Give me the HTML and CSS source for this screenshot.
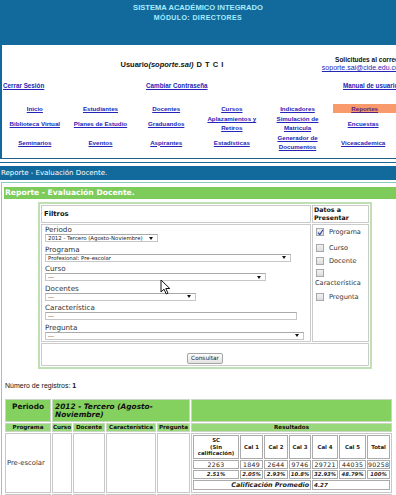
FILE: index.html
```html
<!DOCTYPE html>
<html lang="es">
<head>
    <meta charset="UTF-8">
    <title>Sistema Académico Integrado - Reportes</title>
    <link rel="stylesheet" href="styles.css">
</head>
<body>
    <div class="banner">
        <div class="banner-title">SISTEMA ACADÉMICO INTEGRADO</div>
        <div class="banner-sub">MÓDULO: DIRECTORES</div>
    </div>

    <div class="menu-box">
        <div class="user-row">
            <div class="user">Usuario<i>(soporte.sai)</i> D T C I</div>
            <div class="mail">
                <b>Solicitudes al correo</b><br>
                <a href="#">soporte.sai@cide.edu.co</a>
            </div>
        </div>
        <div class="tools-row">
            <a href="#">Cerrar Sesión</a>
            <a href="#">Cambiar Contraseña</a>
            <a href="#">Manual de usuario</a>
        </div>
        <div class="nav">
            <div class="nav-item"><a href="#">Inicio</a></div>
            <div class="nav-item"><a href="#">Estudiantes</a></div>
            <div class="nav-item"><a href="#">Docentes</a></div>
            <div class="nav-item"><a href="#">Cursos</a></div>
            <div class="nav-item"><a href="#">Indicadores</a></div>
            <div class="nav-item active"><a href="#">Reportes</a></div>

            <div class="nav-item"><a href="#">Biblioteca Virtual</a></div>
            <div class="nav-item"><a href="#">Planes de Estudio</a></div>
            <div class="nav-item"><a href="#">Graduandos</a></div>
            <div class="nav-item"><a href="#">Aplazamientos y<br>Retiros</a></div>
            <div class="nav-item"><a href="#">Simulación de<br>Matricula</a></div>
            <div class="nav-item"><a href="#">Encuestas</a></div>

            <div class="nav-item"><a href="#">Seminarios</a></div>
            <div class="nav-item"><a href="#">Eventos</a></div>
            <div class="nav-item"><a href="#">Aspirantes</a></div>
            <div class="nav-item"><a href="#">Estadísticas</a></div>
            <div class="nav-item"><a href="#">Generador de<br>Documentos</a></div>
            <div class="nav-item"><a href="#">Viceacademica</a></div>
        </div>
    </div>

    <div class="page-bar">
        <div class="page-bar-inner">Reporte - Evaluación Docente.</div>
    </div>

    <div class="panel">
        <div class="panel-head">Reporte - Evaluación Docente.</div>

        <table class="filters">
            <tr>
                <th class="f-head">Filtros</th>
                <th class="d-head">Datos a<br>Presentar</th>
            </tr>
            <tr>
                <td class="f-body">
                    <div class="field">
                        <div class="lbl">Periodo</div>
                        <div class="sel sel-periodo"><span>2012 - Tercero (Agosto-Noviembre)</span><span class="caret"></span></div>
                    </div>
                    <div class="field">
                        <div class="lbl">Programa</div>
                        <div class="sel sel-programa"><span>Profesional: Pre-escolar</span><span class="caret"></span></div>
                    </div>
                    <div class="field">
                        <div class="lbl">Curso</div>
                        <div class="sel sel-curso"><span>---</span><span class="caret"></span></div>
                    </div>
                    <div class="field">
                        <div class="lbl">Docentes</div>
                        <div class="sel sel-docentes"><span>---</span><span class="caret"></span></div>
                    </div>
                    <div class="field">
                        <div class="lbl">Característica</div>
                        <div class="sel sel-caract"><span>---</span></div>
                    </div>
                    <div class="field">
                        <div class="lbl">Pregunta</div>
                        <div class="sel sel-pregunta"><span>---</span><span class="caret"></span></div>
                    </div>
                </td>
                <td class="d-body">
                    <div class="opt">
                        <span class="cb checked"><svg width="7" height="7" viewBox="0 0 7 7"><path d="M1 3.6 L2.8 5.6 L6 0.8" fill="none" stroke="#2a3fa8" stroke-width="1.1"/></svg></span>Programa
                    </div>
                    <div class="opt opt-curso"><span class="cb"></span>Curso</div>
                    <div class="opt"><span class="cb"></span>Docente</div>
                    <div class="opt opt-stack"><span class="cb"></span><span class="opt-text">Característica</span></div>
                    <div class="opt opt-preg"><span class="cb"></span>Pregunta</div>
                </td>
            </tr>
            <tr>
                <td colspan="2" class="f-foot"><button type="button">Consultar</button></td>
            </tr>
        </table>

        <p class="count">Número de registros: <b>1</b></p>

        <table class="results">
            <colgroup>
                <col class="c-prog"><col class="c-curso"><col class="c-doc"><col class="c-car"><col class="c-preg"><col class="c-res">
            </colgroup>
            <tr class="r-period">
                <th>Periodo</th>
                <th colspan="4" class="period-val">2012 - Tercero (Agosto-Noviembre)</th>
                <th></th>
            </tr>
            <tr class="r-head">
                <th>Programa</th>
                <th>Curso</th>
                <th>Docente</th>
                <th>Característica</th>
                <th>Pregunta</th>
                <th>Resultados</th>
            </tr>
            <tr class="r-data">
                <td class="prog">Pre-escolar</td>
                <td></td>
                <td></td>
                <td></td>
                <td></td>
                <td class="res">
                    <table class="scores">
                        <colgroup>
                            <col class="s-sc"><col class="s-c1"><col class="s-c2"><col class="s-c3"><col class="s-c4"><col class="s-c5"><col class="s-tot">
                        </colgroup>
                        <tr class="s-head">
                            <th>SC<br>(Sin<br>calificación)</th>
                            <th>Cal 1</th>
                            <th>Cal 2</th>
                            <th>Cal 3</th>
                            <th>Cal 4</th>
                            <th>Cal 5</th>
                            <th>Total</th>
                        </tr>
                        <tr class="s-val">
                            <td>2263</td><td>1849</td><td>2644</td><td>9746</td><td>29721</td><td>44035</td><td>90258</td>
                        </tr>
                        <tr class="s-pct">
                            <td>2.51%</td><td>2.05%</td><td>2.93%</td><td>10.8%</td><td>32.93%</td><td>48.79%</td><td>100%</td>
                        </tr>
                        <tr class="s-avg">
                            <td colspan="4" class="avg-label">Calificación Promedio</td>
                            <td colspan="3" class="avg-val">4.27</td>
                        </tr>
                    </table>
                </td>
            </tr>
            <tr class="r-next">
                <td></td><td></td><td></td><td></td><td></td><td></td>
            </tr>
        </table>
    </div>

    <svg class="cursor" width="11" height="16" viewBox="0 0 11 16">
        <path d="M1 1 L1 13 L4 10.2 L6.2 15 L8 14.2 L5.8 9.5 L9.8 9.5 Z" fill="#fff" stroke="#111" stroke-width="1"/>
    </svg>
</body>
</html>
```

FILE: styles.css
```css
body {
    margin: 0;
    width: 396px;
    height: 495px;
    overflow: hidden;
    position: relative;
    font-family: "DejaVu Sans", Verdana, sans-serif;
    color: #222;
    background: #fff;
}
a {
    color: #2424b8;
}

/* top banner */
.banner {
    box-sizing: border-box;
    height: 45px;
    padding-top: 3px;
    background: #126a9c;
    color: #a6ecff;
    text-align: center;
    font-family: "Liberation Sans", Arial, sans-serif;
    font-weight: bold;
}
.banner-title {
    font-size: 7.6px;
    line-height: 9px;
}
.banner-sub {
    margin-top: 1px;
    font-size: 7px;
    line-height: 9px;
    letter-spacing: 0.4px;
}

/* menu block */
.menu-box {
    border-left: 2px solid #126a9c;
    border-bottom: 1px solid #1d5f86;
    padding: 11px 0 7px;
    font-family: "Liberation Sans", Arial, sans-serif;
}
.user-row {
    display: flex;
    align-items: center;
}
.user {
    flex: 1;
    padding-left: 20px;
    text-align: center;
    font-size: 7.5px;
    font-weight: bold;
    color: #111;
    word-spacing: 1px;
}
.mail {
    margin-right: -3px;
    text-align: right;
    white-space: nowrap;
    font-size: 6.5px;
    line-height: 8px;
    color: #111;
}
.mail a {
    font-size: 7px;
}
.tools-row {
    display: grid;
    grid-template-columns: 143px 197px auto;
    margin-top: 10px;
    padding-left: 1px;
    line-height: 8px;
    white-space: nowrap;
}
.tools-row a {
    font-size: 6.3px;
    font-weight: bold;
}
.nav {
    display: grid;
    grid-template-columns: repeat(6, 1fr);
    grid-template-rows: 9px 18px 18px;
    row-gap: 1px;
    margin-top: 14px;
}
.nav-item {
    display: flex;
    align-items: center;
    justify-content: center;
    text-align: center;
    line-height: 9px;
}
.nav-item a {
    font-size: 6.2px;
    font-weight: bold;
    white-space: nowrap;
}
.nav-item.active {
    margin-left: 3px;
    height: 9px;
    align-self: start;
    background: #f99a6c;
}
.nav-item.active a {
    color: #5a2080;
}

/* page title bar */
.page-bar {
    margin-top: 3px;
    border-top: 1px solid #1a6a98;
    padding-top: 3px;
}
.page-bar-inner {
    height: 14px;
    line-height: 14px;
    padding-left: 1px;
    background: #126a9c;
    color: #fff;
    font-size: 7px;
}

/* report panel */
.panel {
    margin: 2px -4px 0 1px;
    border: 1px solid #8ccac0;
    border-bottom: none;
    padding: 4px 2px 0;
}
.panel-head {
    height: 12px;
    line-height: 12px;
    padding-left: 1px;
    background: #7dcb5b;
    color: #fff;
    font-size: 7.6px;
    font-weight: bold;
}

/* filters */
.filters {
    margin: 3px 0 0 34px;
    border: 2px solid #bfe0b2;
    border-spacing: 1px;
    table-layout: fixed;
    width: 327px;
}
.filters th,
.filters td {
    border: 1px solid #cbcbcb;
    padding: 0;
}
.f-head {
    width: 266px;
    padding-left: 2px !important;
    text-align: left;
    font-size: 6.8px;
    color: #111;
}
.d-head {
    width: 54px;
    padding-left: 1px !important;
    text-align: left;
    font-size: 6.3px;
    line-height: 8px;
    color: #111;
}
.f-body {
    padding: 0 3px 1px !important;
    vertical-align: top;
}
.field {
    margin-bottom: 2.5px;
}
.field:last-child {
    margin-bottom: 0;
}
.lbl {
    height: 9px;
    line-height: 9px;
    font-size: 7.2px;
    color: #333;
}
.sel {
    box-sizing: border-box;
    display: flex;
    align-items: center;
    justify-content: space-between;
    height: 8px;
    padding: 0 4px 0 2px;
    border: 1px solid #c6c6c6;
    border-top-color: #a9a9a9;
    background: #fff;
    font-size: 5.4px;
    color: #222;
    white-space: nowrap;
}
.caret {
    width: 0;
    height: 0;
    border-left: 2px solid transparent;
    border-right: 2px solid transparent;
    border-top: 3px solid #111;
}
.sel-periodo { width: 113px; }
.sel-programa { width: 246px; }
.sel-curso { width: 221px; }
.sel-docentes { width: 151px; }
.sel-caract { width: 252px; }
.sel-pregunta { width: 259px; }

.d-body {
    padding: 0 1px 0 3px !important;
    vertical-align: top;
    font-size: 6.6px;
    color: #333;
}
.opt {
    display: flex;
    align-items: center;
    height: 13px;
}
.opt-curso {
    margin-top: 3px;
}
.opt-stack {
    display: block;
    height: auto;
}
.opt-stack .cb {
    display: block;
    margin: 2px 0 1px;
}
.opt-text {
    display: block;
    margin-left: -1px;
    line-height: 10px;
}
.opt-preg {
    margin-top: 2px;
}
.cb {
    box-sizing: border-box;
    width: 8px;
    height: 8px;
    margin-right: 5px;
    border: 1px solid #a8a8a8;
    background: linear-gradient(#f2f2f2, #dcdcdc);
}
.cb svg {
    display: block;
}
.f-foot {
    padding: 1px 0 !important;
    text-align: center;
}
.f-foot button {
    height: 11px;
    padding: 0 3px;
    border: 1px solid #a4a4a4;
    border-radius: 2px;
    background: linear-gradient(#fdfdfd, #e2e2e2);
    font-family: "DejaVu Sans", Verdana, sans-serif;
    font-size: 5.8px;
    line-height: 9px;
    color: #222;
}

.count {
    margin: 13px 0 0 1px;
    font-family: "Liberation Sans", Arial, sans-serif;
    font-size: 7px;
    line-height: 8px;
    color: #111;
}

/* results table */
.results {
    margin-top: 8px;
    border-collapse: separate;
    border-spacing: 1px;
    table-layout: fixed;
    width: 389px;
}
.c-prog { width: 46px; }
.c-curso { width: 20px; }
.c-doc { width: 32px; }
.c-car { width: 50px; }
.c-preg { width: 33px; }
.c-res { width: 201px; }
.results th,
.results td {
    box-sizing: border-box;
    border: 1px solid #c9d6c3;
    padding: 0;
}
.r-period th {
    height: 23px;
    padding-top: 3px;
    vertical-align: top;
    background: #84d15f;
    font-size: 7.4px;
    line-height: 8.5px;
    color: #111;
}
.r-period .period-val {
    padding-left: 2px;
    text-align: left;
    font-style: italic;
}
.r-head th {
    height: 9px;
    background: #98d87a;
    font-size: 5.6px;
    line-height: 7px;
    color: #111;
}
.r-data td {
    height: 60px;
    border-color: #c8c8c8;
    background: #fff;
}
.r-data .prog {
    padding-left: 1px;
    font-size: 6.8px;
    color: #333;
}
.r-data .res {
    vertical-align: middle;
}
.r-next td {
    height: 10px;
    border-color: #c8c8c8;
}

.scores {
    width: 199px;
    border-collapse: separate;
    border-spacing: 1px;
    table-layout: fixed;
}
.s-sc { width: 46px; }
.s-c1 { width: 23px; }
.s-c2 { width: 24px; }
.s-c3 { width: 22px; }
.s-c4 { width: 26px; }
.s-c5 { width: 27px; }
.s-tot { width: 23px; }
.scores th,
.scores td {
    border: 1px solid #ababab !important;
    text-align: center;
    color: #222;
}
.s-head th {
    height: 24px;
    font-size: 5.4px;
    line-height: 6.5px;
}
.s-val td {
    height: 9px;
    font-size: 6.2px;
    line-height: 7px;
    letter-spacing: 0.3px;
}
.s-pct td {
    height: 9px;
    font-size: 5.3px;
    line-height: 7px;
    font-weight: bold;
    font-style: italic;
}
.s-avg td {
    height: 10px;
    font-weight: bold;
    font-style: italic;
    line-height: 8px;
}
.avg-label {
    padding-right: 1px !important;
    text-align: right !important;
    font-size: 6.4px;
}
.avg-val {
    padding-left: 1px !important;
    text-align: left !important;
    font-size: 5.6px;
}

.cursor {
    position: absolute;
    left: 160px;
    top: 279px;
}
```
